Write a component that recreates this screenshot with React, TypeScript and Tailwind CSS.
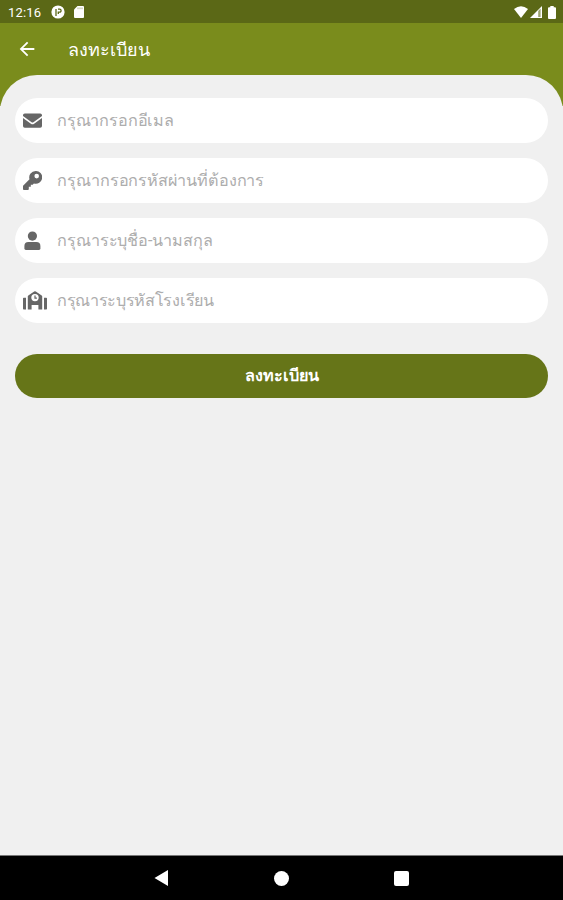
import { useState } from "react";
import type { ComponentType } from "react";
import { MdArrowBack } from "react-icons/md";

interface IconProps {
  className?: string;
}

interface Field {
  name: string;
  type: string;
  placeholder: string;
  Icon: ComponentType<IconProps>;
  iconClass: string;
  inputClass: string;
}

const EnvelopeIcon = ({ className }: IconProps) => (
  <svg className={className} viewBox="0 0 19 19" fill="currentColor">
    <path d="M1.8 2.5h15.4Q19 2.5 19 4.2V5L10.4 11.3Q9.5 11.9 8.6 11.3L0 5V4.2Q0 2.5 1.8 2.5Z" />
    <path d="M0 6.9L7.9 12.7Q9.5 13.8 11.1 12.7L19 6.9V15Q19 16.7 17.2 16.7H1.8Q0 16.7 0 15Z" />
  </svg>
);

const KeyIcon = ({ className }: IconProps) => (
  <svg className={className} viewBox="0 0 19 19">
    <path
      fill="currentColor"
      fillRule="evenodd"
      d="M12.6 0A6.4 6.4 0 1 1 10.9 12.5L9.7 13.8H7.8V15.8H5.8V18.1Q5.8 19 4.9 19H.9Q0 19 0 18.1V15.2Q0 14.7.3 14.4L6.5 8.2A6.4 6.4 0 0 1 12.6 0ZM13.7 2.8A2.3 2.3 0 1 0 13.7 7.4A2.3 2.3 0 1 0 13.7 2.8Z"
    />
  </svg>
);

const UserIcon = ({ className }: IconProps) => (
  <svg className={className} viewBox="0 0 19 19" fill="currentColor">
    <circle cx="9.4" cy="5.1" r="4.6" />
    <path d="M5.4 10.9H13.4Q17.4 10.9 17.4 15V17.6Q17.4 19 16 19H2.8Q1.4 19 1.4 17.6V15Q1.4 10.9 5.4 10.9Z" />
  </svg>
);

const SchoolIcon = ({ className }: IconProps) => (
  <svg className={className} viewBox="0 0 24 19" fill="currentColor">
    <path d="M0 7.5Q0 6.8.7 6.8H3V18.4H.7Q0 18.4 0 17.7zM21 6.8h2.3q.7 0 .7.7v10.2q0 .7-.7.7H21z" />
    <path
      fillRule="evenodd"
      d="M4.8 5.3Q4.8 4.7 5.3 4.4L11.2.4Q12 0 12.8.4L18.7 4.4Q19.2 4.7 19.2 5.3V18.4H15.4V14H8.6V18.4H4.8ZM12 2.9A3.7 3.7 0 1 0 12 10.3A3.7 3.7 0 1 0 12 2.9Z"
    />
    <path d="M11.4 4.6h1.2v2h1.3v1.2h-2.5z" />
  </svg>
);

const fields: Field[] = [
  {
    name: "email",
    type: "email",
    placeholder: "กรุณากรอกอีเมล",
    Icon: EnvelopeIcon,
    iconClass: "h-[19px] w-[19px]",
    inputClass: "tracking-[-0.18px]",
  },
  {
    name: "password",
    type: "password",
    placeholder: "กรุณากรอกรหัสผ่านที่ต้องการ",
    Icon: KeyIcon,
    iconClass: "h-[19px] w-[19px]",
    inputClass: "tracking-[-0.08px]",
  },
  {
    name: "fullName",
    type: "text",
    placeholder: "กรุณาระบุชื่อ-นามสกุล",
    Icon: UserIcon,
    iconClass: "h-[19px] w-[19px]",
    inputClass: "tracking-[-0.1px]",
  },
  {
    name: "schoolCode",
    type: "text",
    placeholder: "กรุณาระบุรหัสโรงเรียน",
    Icon: SchoolIcon,
    iconClass: "h-[19px] w-6",
    inputClass: "tracking-[-0.32px]",
  },
];

const StatusBar = () => (
  <div className="flex h-[23px] items-center bg-[#5b6816] pt-px pr-[7px] pl-[8px] text-white">
    <span className="w-[43px] text-[13px] leading-none tracking-[0.2px]">
      12:16
    </span>
    <svg className="h-[14px] w-[14px]" viewBox="0 0 14 14">
      <circle cx="7" cy="7" r="6.6" fill="currentColor" />
      <path
        d="M5 11V4M7 4.2h1.6a1.5 1.5 0 0 1 0 3H7.3V9"
        fill="none"
        stroke="#5b6816"
        strokeWidth="1.3"
      />
    </svg>
    <svg className="ml-[9px] h-3 w-[10px]" viewBox="0 0 10 12">
      <path
        d="M3.5 0H9a1 1 0 0 1 1 1v10a1 1 0 0 1-1 1H1a1 1 0 0 1-1-1V3.5z"
        fill="currentColor"
      />
      <path
        d="M4 1.5v1.7M6 1.5v1.7M8 1.5v1.7"
        stroke="#5b6816"
        strokeWidth=".5"
      />
    </svg>
    <svg className="ml-auto h-3 w-[14px]" viewBox="0 0 14 12">
      <path d="M0 3Q7-2.6 14 3L7 12z" fill="currentColor" />
    </svg>
    <svg className="ml-[2px] h-3 w-3" viewBox="0 0 12 12">
      <path d="M12 0v12H0z" fill="currentColor" />
      <path d="M8.2 5v6h2.4V2.6z" fill="#5b6816" opacity=".6" />
    </svg>
    <svg className="ml-[6px] h-[13px] w-2" viewBox="0 0 8 13">
      <path
        d="M2.3 0h3.4v1.3H7a1 1 0 0 1 1 1V12a1 1 0 0 1-1 1H1a1 1 0 0 1-1-1V2.3a1 1 0 0 1 1-1h1.3z"
        fill="currentColor"
      />
    </svg>
  </div>
);

const NavigationBar = () => (
  <nav className="flex h-11 items-center justify-center gap-[105px] bg-black text-white">
    <button title="Back">
      <svg className="h-4 w-[15px]" viewBox="0 0 15 16">
        <path d="M14 0v16L.5 8z" fill="currentColor" />
      </svg>
    </button>
    <button title="Home" className="h-[15px] w-[15px] rounded-full bg-white" />
    <button
      title="Recent"
      className="h-[15px] w-[15px] rounded-[2px] bg-white"
    />
  </nav>
);

const App = () => {
  const [values, setValues] = useState<Record<string, string>>({});

  return (
    <div className="flex h-screen flex-col bg-[#f0f0f0] font-[Roboto,sans-serif]">
      <StatusBar />
      <header className="flex h-[83px] items-start bg-[#7a8c1c] text-white">
        <button title="Back" className="mt-[15px] ml-[16px]">
          <MdArrowBack className="h-[22px] w-[22px]" />
        </button>
        <h1 className="mt-[15px] ml-[30px] text-[18px] leading-6">ลงทะเบียน</h1>
      </header>
      <main className="-mt-[31px] flex-1 rounded-t-[37px] bg-[#f0f0f0] px-[15px] pt-[23px]">
        <form onSubmit={(event) => event.preventDefault()}>
          <div className="flex flex-col gap-[15px]">
            {fields.map(
              ({ name, type, placeholder, Icon, iconClass, inputClass }) => (
                <label
                  key={name}
                  className="flex h-[45px] items-center rounded-full bg-white pr-4 pl-2"
                >
                  <span className="flex w-[34px] text-[#666]">
                    <Icon className={iconClass} />
                  </span>
                  <input
                    name={name}
                    type={type}
                    placeholder={placeholder}
                    value={values[name] ?? ""}
                    onChange={({ target }) =>
                      setValues({ ...values, [name]: target.value })
                    }
                    className={`flex-1 pt-[2px] text-[16.2px] outline-none placeholder:text-[#adadad] ${inputClass}`}
                  />
                </label>
              ),
            )}
          </div>
          <button className="mt-[31px] h-11 w-full rounded-full bg-[#667518] pt-px text-[16.2px] font-bold text-white">
            ลงทะเบียน
          </button>
        </form>
      </main>
      <div className="h-px bg-[#777]" />
      <NavigationBar />
    </div>
  );
};

export default App;
